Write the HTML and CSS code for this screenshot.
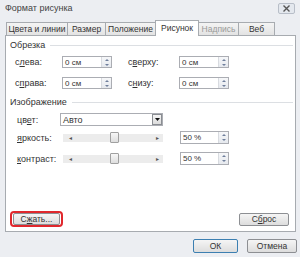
FILE: index.html
```html
<!DOCTYPE html>
<html lang="ru">
<head>
    <meta charset="UTF-8">
    <title>Формат рисунка</title>
    <link rel="stylesheet" href="styles.css">
</head>
<body>
    <div class="dialog">
        <div class="titlebar">
            <span class="title">Формат рисунка</span>
            <span class="close">
                <svg width="9" height="7" viewBox="0 0 9 7"><path d="M1.5 0.5 L7.5 6.5 M7.5 0.5 L1.5 6.5" stroke="#555" stroke-width="1.4" fill="none"/></svg>
            </span>
        </div>

        <div class="tabs">
            <div class="tab t1">Цвета и линии</div>
            <div class="tab t2">Размер</div>
            <div class="tab t3">Положение</div>
            <div class="tab t4 active">Рисунок</div>
            <div class="tab t5 disabled">Надпись</div>
            <div class="tab t6">Веб</div>
        </div>

        <div class="panel">
            <div class="group-title"><span>Обрезка</span><i></i></div>
            <div class="row crop-row">
                <span class="lbl lbl-left">с<u>л</u>ева:</span>
                <div class="spin"><span class="val">0 см</span><span class="arrows"><b class="up"></b><b class="down"></b></span></div>
                <span class="lbl lbl-mid">с<u>в</u>ерху:</span>
                <div class="spin"><span class="val">0 см</span><span class="arrows"><b class="up"></b><b class="down"></b></span></div>
            </div>
            <div class="row crop-row second">
                <span class="lbl lbl-left">с<u>п</u>рава:</span>
                <div class="spin"><span class="val">0 см</span><span class="arrows"><b class="up"></b><b class="down"></b></span></div>
                <span class="lbl lbl-mid">с<u>н</u>изу:</span>
                <div class="spin"><span class="val">0 см</span><span class="arrows"><b class="up"></b><b class="down"></b></span></div>
            </div>

            <div class="group-title image-title"><span>Изображение</span><i></i></div>
            <div class="row img-row">
                <span class="lbl lbl-img">цв<u>е</u>т:</span>
                <div class="select"><span class="val">Авто</span><span class="drop"><svg width="5" height="3" viewBox="0 0 5 3"><path d="M0 0 H5 L2.5 3 Z" fill="#111"/></svg></span></div>
            </div>
            <div class="row img-row slider-row">
                <span class="lbl lbl-img"><u>я</u>ркость:</span>
                <div class="slider"><span class="arr">&#9666;</span><span class="thumb"></span><span class="arr">&#9656;</span></div>
                <div class="spin pct"><span class="val">50 %</span><span class="arrows"><b class="up"></b><b class="down"></b></span></div>
            </div>
            <div class="row img-row slider-row second">
                <span class="lbl lbl-img"><u>к</u>онтраст:</span>
                <div class="slider"><span class="arr">&#9666;</span><span class="thumb"></span><span class="arr">&#9656;</span></div>
                <div class="spin pct"><span class="val">50 %</span><span class="arrows"><b class="up"></b><b class="down"></b></span></div>
            </div>

            <div class="panel-footer">
                <span class="highlight"><span class="btn btn-compress">С<u>ж</u>ать...</span></span>
                <span class="btn btn-reset">С<u>б</u>рос</span>
            </div>
        </div>

        <div class="footer">
            <span class="btn btn-ok">ОК</span>
            <span class="btn btn-cancel">Отмена</span>
        </div>
    </div>
</body>
</html>
```

FILE: styles.css
```css
body {
    margin: 0;
    font-family: "Liberation Sans", Arial, sans-serif;
    font-size: 9px;
    color: #333;
}
.dialog {
    width: 300px;
    height: 257px;
    background-color: #eceef2;
    overflow: hidden;
}
.titlebar {
    height: 20px;
    display: flex;
    align-items: flex-start;
    justify-content: space-between;
    padding: 0 5px 0 5px;
}
.title {
    margin-top: 3px;
    color: #444;
}
.close {
    margin-top: 3px;
    width: 15px;
    height: 9px;
    border: 1px solid #b8bec8;
    border-radius: 2px;
    background-color: #e4e8ee;
    display: flex;
    align-items: center;
    justify-content: center;
}
.tabs {
    display: flex;
    align-items: flex-end;
    height: 15px;
    padding-left: 6px;
    position: relative;
    z-index: 1;
}
.tab {
    height: 13px;
    box-sizing: border-box;
    border: 1px solid #a7abb0;
    border-bottom: none;
    background: linear-gradient(#f4f4f4, #e3e3e3);
    text-align: center;
    line-height: 12px;
    margin-right: -1px;
    color: #333;
    white-space: nowrap;
    font-size: 8.5px;
}
.tab.active {
    height: 16px;
    margin-bottom: -1px;
    background: #fff;
    line-height: 14px;
}
.tab.disabled {
    color: #9a9a9a;
}
.t1 { width: 62px; }
.t2 { width: 39px; }
.t3 { width: 51px; }
.t4 { width: 44px; }
.t5 { width: 41px; }
.t6 { width: 37px; }
.panel {
    margin-left: 5px;
    width: 291px;
    height: 197px;
    box-sizing: border-box;
    border: 1px solid #a7abb0;
    background-color: #fff;
    padding-top: 3px;
    display: flex;
    flex-direction: column;
}
.group-title {
    height: 12px;
    display: flex;
    align-items: center;
    padding-left: 4px;
    padding-right: 2px;
}
.group-title i {
    flex: 1;
    height: 1px;
    background-color: #dcdfe3;
    margin-left: 5px;
}
.image-title {
    margin-top: 7px;
}
.row {
    display: flex;
    align-items: center;
}
.crop-row {
    height: 12px;
    margin-top: 5px;
    padding-left: 9px;
}
.crop-row.second {
    margin-top: 9px;
}
.lbl-left {
    width: 47px;
}
.lbl-mid {
    width: 51px;
    margin-left: 16px;
}
.spin {
    width: 50px;
    height: 12px;
    box-sizing: border-box;
    border: 1px solid #abadb3;
    display: flex;
    align-items: center;
    justify-content: space-between;
    font-size: 8px;
}
.spin .val {
    padding-left: 2px;
}
.arrows {
    width: 10px;
    height: 10px;
    box-sizing: border-box;
    border-left: 1px solid #d8dbe0;
    background: linear-gradient(#f6f7f9, #e6e9ee);
    display: flex;
    flex-direction: column;
    align-items: center;
    justify-content: space-around;
}
.arrows b {
    width: 0;
    height: 0;
    border-left: 2px solid transparent;
    border-right: 2px solid transparent;
}
.arrows .up {
    border-bottom: 2px solid #6f7f9c;
}
.arrows .down {
    border-top: 2px solid #6f7f9c;
}
.img-row {
    height: 13px;
    margin-top: 5px;
    padding-left: 11px;
}
.lbl-img {
    width: 43px;
}
.select {
    width: 103px;
    height: 13px;
    box-sizing: border-box;
    border: 1px solid #abadb3;
    display: flex;
    align-items: center;
    justify-content: space-between;
}
.select .val {
    padding-left: 2px;
}
.drop {
    width: 10px;
    height: 11px;
    box-sizing: border-box;
    border: 1px solid #8a8d92;
    background: linear-gradient(#f4f4f4, #dcdcdc);
    display: flex;
    align-items: center;
    justify-content: center;
}
.slider-row.second {
    margin-top: 8px;
}
.slider {
    margin-left: 3px;
    width: 100px;
    height: 8px;
    background-color: #ececec;
    display: flex;
    align-items: center;
    justify-content: space-between;
    padding: 0 4px 0 6px;
    box-sizing: border-box;
    font-size: 6px;
    color: #555;
    position: relative;
}
.thumb {
    position: absolute;
    left: 47px;
    top: -2px;
    width: 9px;
    height: 11px;
    box-sizing: border-box;
    border: 1px solid #a0a0a0;
    border-radius: 1px;
    background: linear-gradient(#f7f7f7, #dedede);
}
.pct {
    width: 49px;
    height: 13px;
    margin-left: 17px;
}
.pct .arrows {
    height: 11px;
}
.panel-footer {
    margin-top: auto;
    display: flex;
    justify-content: space-between;
    align-items: center;
    padding: 0 6px 4px 4px;
}
.btn {
    display: inline-flex;
    align-items: center;
    justify-content: center;
    box-sizing: border-box;
    height: 12px;
    border: 1px solid #8d8f93;
    border-radius: 2px;
    background: linear-gradient(#f5f5f5, #dddddd);
    font-size: 8.5px;
    color: #333;
}
.highlight {
    display: inline-flex;
    padding: 0 1px;
    border: 2px solid #e0282d;
    border-radius: 4px;
}
.btn-compress {
    width: 47px;
}
.btn-reset {
    width: 50px;
    height: 13px;
}
.footer {
    display: flex;
    justify-content: flex-end;
    gap: 9px;
    padding: 7px 3px 0 0;
}
.btn-ok {
    width: 45px;
    height: 14px;
    border-color: #3c7fb1;
}
.btn-cancel {
    width: 50px;
    height: 14px;
}
```
